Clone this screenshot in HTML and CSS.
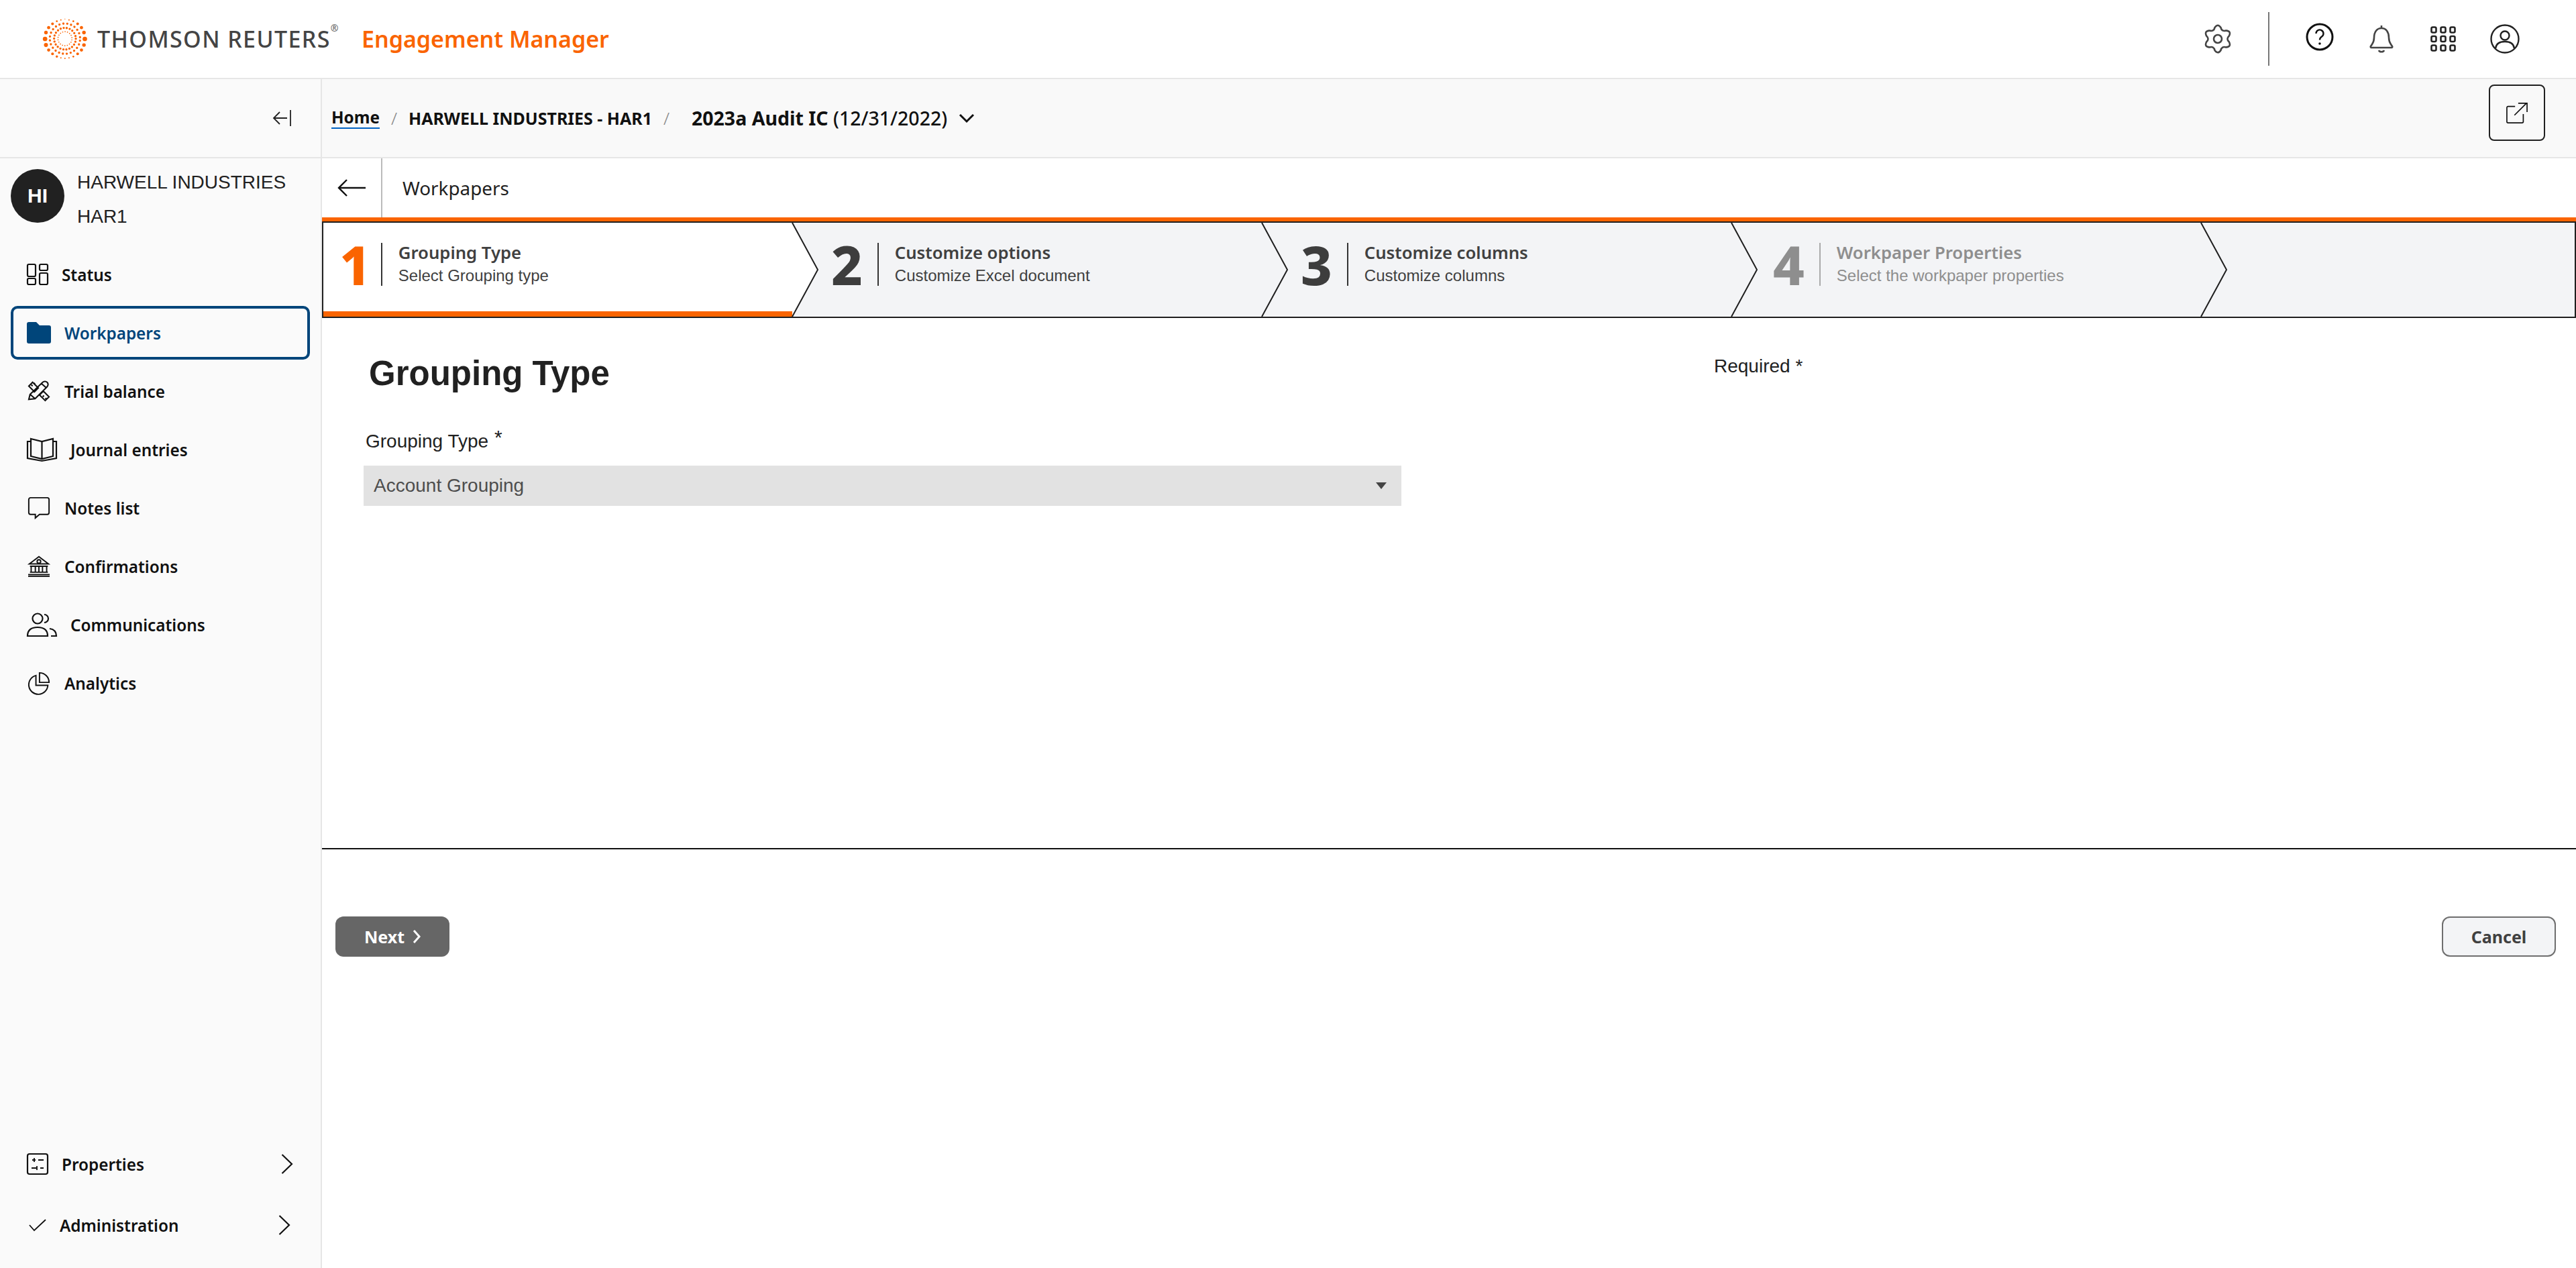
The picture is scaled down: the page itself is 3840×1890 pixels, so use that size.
FILE: index.html
```html
<!DOCTYPE html>
<html lang="en">
<head>
<meta charset="utf-8">
<title>Engagement Manager</title>
<link rel="stylesheet" href="styles.css">
</head>
<body>
<header class="topbar">
  <div class="brand">
    <svg class="logo-mark" viewBox="43 37 195 178" fill="#fa6400" stroke="#fa6400" stroke-linecap="round">
      <g stroke="none">
        <circle cx="140" cy="38" r="2"/><circle cx="158" cy="42" r="3"/><circle cx="177" cy="48" r="4"/><circle cx="196" cy="59" r="6"/><circle cx="213" cy="76" r="7"/><circle cx="224" cy="98" r="8"/><circle cx="228" cy="126" r="10"/><circle cx="224" cy="153" r="8"/><circle cx="213" cy="175" r="7"/><circle cx="196" cy="192" r="6"/><circle cx="177" cy="204" r="4"/><circle cx="158" cy="210" r="3"/><circle cx="140" cy="212" r="3"/><circle cx="122" cy="210" r="3"/><circle cx="104" cy="204" r="5"/><circle cx="85" cy="192" r="6"/><circle cx="68" cy="175" r="7"/><circle cx="56" cy="153" r="9"/><circle cx="52" cy="126" r="10"/><circle cx="56" cy="98" r="8"/><circle cx="68" cy="76" r="7"/><circle cx="85" cy="59" r="6"/><circle cx="104" cy="48" r="4"/><circle cx="122" cy="42" r="3"/>
      </g>
      <circle cx="140" cy="125" r="67" fill="none" stroke-width="10" pathLength="24" stroke-dasharray="0 1" transform="rotate(7.500 140 125)"/>
      <circle cx="140" cy="125" r="48" fill="none" stroke-width="10" pathLength="22" stroke-dasharray="0 1"/>
      <circle cx="140" cy="125" r="31" fill="none" stroke-width="5" pathLength="18" stroke-dasharray="0 1" transform="rotate(10 140 125)"/>
    </svg>
    <span class="logo-word">THOMSON REUTERS<sup class="reg">®</sup></span>
    <span class="app-name">Engagement Manager</span>
  </div>
  <div class="top-actions">
    <svg class="ti gear" viewBox="0 0 42 44"><path class="gr" d="M16.500 5.100Q21-1.500 25.500 5.100Q27 11.600 33.400 9.600Q41.400 10.250 37.900 17.500Q33 22 37.900 26.500Q41.400 33.750 33.400 34.400Q27 32.400 25.500 38.900Q21 45.500 16.500 38.900Q15 32.400 8.600 34.400Q.6 33.750 4.100 26.500Q9 22 4.100 17.500Q.6 10.250 8.600 9.600Q15 11.600 16.500 5.100z"/><circle class="gr" cx="21" cy="22" r="6"/></svg>
    <span class="top-sep"></span>
    <svg class="ti help" viewBox="0 0 42 42"><circle cx="21" cy="21" r="19" fill="none" stroke="#111" stroke-width="3"/><path d="M15.500 16a5.500 5.500 0 1 1 8.600 4.500c-2 1.300-3.100 2.300-3.100 5" fill="none" stroke="#111" stroke-width="2.400"/><circle cx="21" cy="31" r="1.800" fill="#111"/></svg>
    <svg class="ti bell" viewBox="0 0 38 43"><path class="gr" d="M19 1v3M5 29c2-3 3-5 3-10 0-8 4-14 11-14s11 6 11 14c0 5 1 7 3 10l2 3c.6 1 0 2-1 2H4c-1 0-1.600-1-1-2zM15 38c1 3 7 3 8 0"/></svg>
    <svg class="ti grid" viewBox="0 0 38 38"><g fill="none" stroke="#222" stroke-width="2.600"><rect x="1.500" y="1.500" width="7" height="8" rx="2"/><rect x="15.500" y="1.500" width="7" height="8" rx="2"/><rect x="29.500" y="1.500" width="7" height="8" rx="2"/><rect x="1.500" y="15" width="7" height="8" rx="2"/><rect x="15.500" y="15" width="7" height="8" rx="2"/><rect x="29.500" y="15" width="7" height="8" rx="2"/><rect x="1.500" y="28.500" width="7" height="8" rx="2"/><rect x="15.500" y="28.500" width="7" height="8" rx="2"/><rect x="29.500" y="28.500" width="7" height="8" rx="2"/></g></svg>
    <svg class="ti user" viewBox="0 0 44 44"><g fill="none" stroke="#222" stroke-width="2.400"><circle cx="22" cy="22" r="20.500"/><circle cx="22" cy="17" r="6.500"/><path d="M8 36c1-7 6-10 14-10s13 3 14 10"/></g></svg>
  </div>
</header>

<div class="shell">
  <aside class="sidebar">
    <div class="side-top">
      <svg class="collapse" viewBox="0 0 28 24"><path d="M11 3 2 12l9 9M2 12h20M27 0v24" fill="none" stroke="#222" stroke-width="1.800"/></svg>
    </div>
    <div class="client">
      <span class="avatar">HI</span>
      <div class="client-name"><div>HARWELL INDUSTRIES</div><div>HAR1</div></div>
    </div>
    <nav class="nav">
      <a class="nav-item"><svg class="ni" viewBox="0 0 32 32"><g class="st"><rect x="1" y="1" width="12" height="18" rx="2"/><rect x="19" y="1" width="12" height="9" rx="2"/><rect x="1" y="22" width="12" height="9" rx="2"/><rect x="19" y="14" width="12" height="17" rx="2"/></g></svg><span class="nl">Status</span></a>
      <a class="nav-item active"><svg class="ni wide36" viewBox="0 0 36 32"><path d="M0 3a3 3 0 0 1 3-3h11l5 5h14a3 3 0 0 1 3 3v21a3 3 0 0 1-3 3H3a3 3 0 0 1-3-3z" fill="#00457a"/></svg><span class="nl">Workpapers</span></a>
      <a class="nav-item"><svg class="ni wide36" viewBox="0 0 36 34"><g class="st"><path d="M2 30l2-8L24 3c2-2 5-2 7 0s2 5 0 7L12 29zM4 22l8 7M22 5l8 7M2 9l6-6 9 9-6 6zM6 7l2 2M10 4l2 2M19 23l6-6 9 9-6 6zM24 26l2-2M28 30l2-2"/></g></svg><span class="nl">Trial balance</span></a>
      <a class="nav-item"><svg class="ni wide45" viewBox="0 0 45 36"><g class="st"><path d="M6 2l16.500 4L39 2v26l-16.500 4L6 28zM22.500 6v26M6 6H1v25l21.500 4L44 31V6h-5"/></g></svg><span class="nl">Journal entries</span></a>
      <a class="nav-item"><svg class="ni wide36" viewBox="0 0 36 36"><path class="st" d="M4 1h28a3 3 0 0 1 3 3v22a3 3 0 0 1-3 3H19l-7 6v-6H4a3 3 0 0 1-3-3V4a3 3 0 0 1 3-3z"/></svg><span class="nl">Notes list</span></a>
      <a class="nav-item"><svg class="ni wide36" viewBox="0 0 36 36"><g class="st"><path d="M2 14 18 2l16 12zM5 18v10M12 18v10M18 18v10M24 18v10M31 18v10M3 18h30M3 28h30M0 32h36M0 35h36"/><circle cx="18" cy="10" r="3"/></g></svg><span class="nl">Confirmations</span></a>
      <a class="nav-item"><svg class="ni wide45" viewBox="0 0 45 36"><g class="st"><circle cx="16" cy="9" r="7.500"/><path d="M26 3a6 6 0 1 1 0 12M1 35c0-9 6-13 15-13s15 4 15 13zM36 35h8c0-6-3-10-10-11"/></g></svg><span class="nl">Communications</span></a>
      <a class="nav-item"><svg class="ni wide36" viewBox="0 0 36 36"><g class="st"><path d="M13 5.500A16 16 0 1 0 33 22H13z"/><path d="M19 1a16 16 0 0 1 16 16H19z"/></g></svg><span class="nl">Analytics</span></a>
    </nav>
    <div class="side-bottom">
      <a class="bottom-item"><svg class="ni prop" viewBox="0 0 32 32"><rect class="st" x="1" y="1" width="30" height="30" rx="3"/><path class="st thin" d="M8 10h5M11 7v6M17 10h8M7 22h8M15 19v6M20 22h5"/></svg><span class="nl">Properties</span><svg class="chev" viewBox="0 0 18 30"><path class="st" d="M1.500 1 16 15 1.500 29"/></svg></a>
      <a class="bottom-item admin"><svg class="check" viewBox="0 0 26 18"><path class="st thin" d="M1 9l7 8L25 1"/></svg><span class="nl">Administration</span><svg class="chev" viewBox="0 0 18 30"><path class="st" d="M1.500 1 16 15 1.500 29"/></svg></a>
    </div>
  </aside>

  <main class="main">
    <div class="crumbs">
      <a class="crumb home">Home</a><span class="slash">/</span>
      <span class="crumb">HARWELL INDUSTRIES - HAR1</span><span class="slash">/</span>
      <span class="engagement"><b>2023a Audit IC</b> (12/31/2022)</span>
      <svg class="eng-chev" viewBox="0 0 24 14"><path d="M2 2l10 10L22 2" fill="none" stroke="#111" stroke-width="3"/></svg>
      <span class="open-btn"><svg viewBox="0 0 34 34" class="open-ic"><path class="st thin" d="M14 7H3a2 2 0 0 0-2 2v22a2 2 0 0 0 2 2h22a2 2 0 0 0 2-2V19M13 21 32 2M19 2h14v14"/></svg></span>
    </div>
    <div class="page-bar">
      <span class="back"><svg viewBox="0 0 42 28" class="back-ic"><path d="M14 2 2 14l12 12M2 14h40" fill="none" stroke="#111" stroke-width="2.400"/></svg></span>
      <span class="page-title">Workpapers</span>
    </div>
    <div class="orange-rule"></div>
    <div class="stepper">
      <div class="step current"><span class="num">1</span><span class="step-text"><span class="st-title">Grouping Type</span><span class="st-sub">Select Grouping type</span></span>
        <svg class="arrow" viewBox="0 0 40 140" preserveAspectRatio="none"><path class="arrow-fill" d="M0 0 38 70 0 140z"/><path class="arrow-line" d="M0 0 38 70 0 140"/></svg></div>
      <div class="step"><span class="num">2</span><span class="step-text"><span class="st-title">Customize options</span><span class="st-sub">Customize Excel document</span></span>
        <svg class="arrow" viewBox="0 0 40 140" preserveAspectRatio="none"><path class="arrow-fill" d="M0 0 38 70 0 140z"/><path class="arrow-line" d="M0 0 38 70 0 140"/></svg></div>
      <div class="step"><span class="num">3</span><span class="step-text"><span class="st-title">Customize columns</span><span class="st-sub">Customize columns</span></span>
        <svg class="arrow" viewBox="0 0 40 140" preserveAspectRatio="none"><path class="arrow-fill" d="M0 0 38 70 0 140z"/><path class="arrow-line" d="M0 0 38 70 0 140"/></svg></div>
      <div class="step disabled"><span class="num">4</span><span class="step-text"><span class="st-title">Workpaper Properties</span><span class="st-sub">Select the workpaper properties</span></span>
        <svg class="arrow" viewBox="0 0 40 140" preserveAspectRatio="none"><path class="arrow-fill" d="M0 0 38 70 0 140z"/><path class="arrow-line" d="M0 0 38 70 0 140"/></svg></div>
    </div>
    <section class="form-area">
      <div class="form-head"><h1>Grouping Type</h1><span class="required">Required *</span></div>
      <label class="field-label">Grouping Type <span class="star">*</span></label>
      <div class="select"><span>Account Grouping</span><i class="caret"></i></div>
    </section>
    <footer class="actions">
      <button class="btn next">Next<svg class="next-ch" viewBox="0 0 12 20"><path d="M2 1l8 9-8 9" fill="none" stroke="#fff" stroke-width="3"/></svg></button>
      <button class="btn cancel">Cancel</button>
    </footer>
  </main>
</div>
</body>
</html>
```
FILE: styles.css
```css
* { box-sizing: border-box; }
html, body { margin: 0; height: 100%; }
body { width: 3840px; height: 1890px; overflow: hidden; background: #fff; color: #111; font-family: "Noto Sans", sans-serif; display: flex; flex-direction: column; }
a { color: inherit; text-decoration: none; }
svg { display: block; flex: none; overflow: visible; }
.st { fill: none; stroke: #111; stroke-width: 2.2; }
.thin { stroke-width: 1.8; }
.gr { fill: none; stroke: #444; stroke-width: 2.6; stroke-linejoin: round; }

.topbar { height: 118px; flex: none; border-bottom: 2px solid #e6e6e6; display: flex; align-items: center; justify-content: space-between; padding: 0 84px 0 64px; }
.brand { display: flex; align-items: center; }
.logo-mark { width: 66px; height: 60px; }
.logo-word { font-size: 34px; color: #444; margin-left: 15px; letter-spacing: 1.4px; font-weight: 500; width: 394px; white-space: nowrap; }
.reg { font-size: 14px; vertical-align: top; line-height: 1; color: #666; letter-spacing: 0; }
.app-name { font-size: 34px; font-weight: 600; color: #fa6400; }
.top-actions { display: flex; align-items: center; }
.gear { width: 42px; height: 44px; }
.top-sep { width: 2px; height: 80px; background: #777; margin: 0 54px; }
.help { width: 42px; height: 42px; margin-top: -6px; }
.bell { width: 38px; height: 43px; margin-left: 52px; }
.grid { width: 38px; height: 38px; margin-left: 54px; }
.user { width: 44px; height: 44px; margin-left: 51px; }

.shell { flex: 1; display: flex; min-height: 0; }
.sidebar { width: 480px; flex: none; background: #fafafa; border-right: 2px solid #e6e6e6; display: flex; flex-direction: column; }
.side-top { height: 118px; flex: none; border-bottom: 2px solid #e6e6e6; display: flex; align-items: center; justify-content: flex-end; padding: 0 44px 0 0; }
.collapse { width: 28px; height: 24px; }
.client { display: flex; padding: 16px 0 0 16px; height: 133px; flex: none; }
.avatar { width: 80px; height: 80px; border-radius: 50%; background: #212121; color: #fff; font: 700 30px "Liberation Sans", sans-serif; display: flex; align-items: center; justify-content: center; }
.client-name { margin-left: 19px; font: 28px/51px "Liberation Sans", sans-serif; color: #212121; margin-top: -6px; }
.nav { display: flex; flex-direction: column; gap: 7px; padding: 0 16px; }
.nav-item { height: 80px; display: flex; align-items: center; padding-left: 20px; border: 4px solid transparent; border-radius: 10px; width: 446px; }
.ni { width: 32px; height: 32px; }
.wide36 { width: 36px; }
.wide45 { width: 45px; height: 36px; }
.nl { font-size: 24.3px; font-weight: 600; margin-left: 20px; white-space: nowrap; color: #111; }
.active { border-color: #00457a; }
.active .nl { color: #00457a; }
.side-bottom { margin-top: auto; padding: 0 0 49px 0; }
.bottom-item { display: flex; align-items: center; height: 30px; padding-left: 40px; margin-bottom: 61px; }
.bottom-item .chev { width: 18px; height: 30px; margin-left: auto; margin-right: 41px; }
.admin { margin-bottom: 0; }
.admin .chev { margin-right: 45px; }
.check { width: 26px; height: 18px; margin-left: 3px; }

.main { flex: 1; min-width: 0; display: flex; flex-direction: column; }
.crumbs { height: 118px; flex: none; background: #f9f9f9; border-bottom: 2px solid #e6e6e6; display: flex; align-items: center; padding: 0 46px 0 14px; }
.crumb { font-size: 25px; font-weight: 700; color: #111; white-space: nowrap; }
.home { border-bottom: 2px solid #0062c4; line-height: 30px; font-size: 24.300px; }
.slash { color: #888; font-size: 26px; margin: 0 17px; font-weight: 300; }
.engagement { font-size: 28.500px; font-weight: 500; margin-left: 16px; color: #111; }
.engagement b { font-weight: 700; }
.eng-chev { width: 24px; height: 14px; margin-left: 17px; }
.open-btn { margin-left: auto; align-self: flex-start; margin-top: 8px; width: 84px; height: 84px; border: 2.500px solid #212121; border-radius: 8px; display: flex; align-items: center; justify-content: center; }
.open-ic { width: 32px; height: 32px; }

.page-bar { height: 88px; flex: none; display: flex; align-items: center; }
.back { width: 90px; height: 88px; border-right: 2px solid #bbb; display: flex; align-items: center; justify-content: center; flex: none; }
.back-ic { width: 42px; height: 28px; }
.page-title { font-size: 27.800px; margin-left: 30px; color: #212121; }
.orange-rule { height: 6px; flex: none; background: #fa6400; }

.stepper { height: 144px; flex: none; display: flex; background: #f3f4f6; border: 2px solid #1f1f1f; }
.step { width: 700px; height: 140px; position: relative; display: flex; align-items: flex-start; flex: none; padding: 30px 0 0 58px; }
.step:first-child { width: 699px; padding-left: 24px; }
.step.disabled { padding-left: 62px; }
.current { background: #fff; box-shadow: inset 0 -8px 0 #fa6400; }
.num { font-size: 81px; line-height: 64px; height: 64px; font-weight: 800; color: #3d3d3d; margin-right: 22px; }
.current .num { color: #fa6400; margin-right: 15px; }
.step-text { border-left: 2px solid #333; height: 64px; display: flex; flex-direction: column; padding-left: 24px; white-space: nowrap; }
.st-title { font-size: 25.700px; font-weight: 600; line-height: 30px; color: #404040; }
.st-sub { font: 24px/37px "Liberation Sans", sans-serif; color: #404040; }
.disabled .num, .disabled .st-title, .disabled .st-sub { color: #8e8e8e; }
.disabled .step-text { border-color: #aaa; }
.arrow { position: absolute; right: -40px; top: 0; width: 40px; height: 140px; z-index: 1; }
.arrow-fill { fill: #f3f4f6; }
.current .arrow-fill { fill: #fff; }
.arrow-line { fill: none; stroke: #1f1f1f; stroke-width: 2; }

.form-area { height: 792px; flex: none; border-bottom: 2px solid #111; padding: 0 0 0 62px; font-family: "Liberation Sans", sans-serif; color: #212121; }
.form-head { display: flex; align-items: flex-start; margin-top: 52px; height: 62px; }
.form-head h1 { margin: 0 0 0 8px; font-size: 51px; font-weight: 700; width: 2005px; line-height: 62px; }
.required { font-size: 28px; line-height: 34px; margin-top: 3px; }
.field-label { display: block; margin: 46px 0 0 3px; font-size: 28px; line-height: 36px; }
.star { font-size: 30px; vertical-align: 5px; margin-left: 1px; }
.select { width: 1547px; height: 60px; background: #e2e2e2; margin-top: 18px; display: flex; align-items: center; justify-content: space-between; padding: 0 22px 0 15px; font-size: 28px; color: #4d4d4d; }
.caret { border-left: 8px solid transparent; border-right: 8px solid transparent; border-top: 10px solid #444; }

.actions { flex: 1; display: flex; justify-content: space-between; align-items: flex-start; padding: 100px 30px 0 20px; }
.btn { width: 170px; height: 60px; border-radius: 12px; font: 700 25px "Noto Sans", sans-serif; display: flex; align-items: center; justify-content: center; cursor: pointer; }
.next { background: #666; color: #fff; border: 0; }
.next-ch { width: 12px; height: 20px; margin-left: 12px; }
.cancel { background: #f3f4f6; color: #404040; border: 2px solid #6e6e6e; }
```
